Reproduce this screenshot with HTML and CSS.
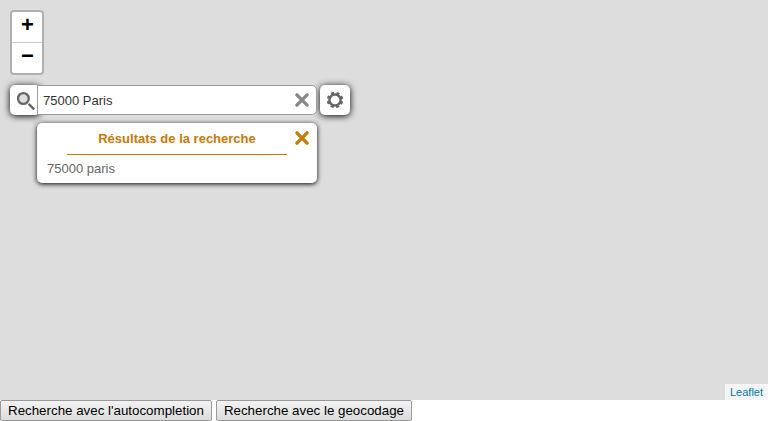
FILE: index.html
```html
<!DOCTYPE html>
<html lang="fr">
<head>
<meta charset="utf-8">
<title>Recherche</title>
<link rel="stylesheet" href="styles.css">
</head>
<body>
<div class="map">
  <div class="zoom">
    <a class="zoom-in">+</a>
    <a class="zoom-out">−</a>
  </div>
  <div class="search">
    <div class="tool picto">
      <svg width="30" height="30" viewBox="0 0 30 30"><circle cx="13.4" cy="13.5" r="5.4" fill="#ddd" stroke="#666" stroke-width="2.3"/><path d="M18.6 18.8L24.2 24.4" stroke="#666" stroke-width="2.4"/></svg>
    </div>
    <div class="field">
      <span class="value">75000 Paris</span>
      <svg class="cross" width="16" height="16" viewBox="0 0 16 16"><path d="M2.9 2.9L13.1 13.1M13.1 2.9L2.9 13.1"/></svg>
    </div>
    <div class="tool advanced">
      <svg width="30" height="30" viewBox="0 0 30 30"><g fill="none" stroke="#666"><circle cx="15" cy="15" r="5.6" stroke-width="2.5"/><circle cx="15" cy="15" r="7.1" stroke-width="2.4" stroke-dasharray="3 2.576" stroke-dashoffset="-1.29"/></g></svg>
    </div>
  </div>
  <div class="results">
    <div class="results-head">
      <div class="title">Résultats de la recherche</div>
      <svg class="cross close" width="16" height="16" viewBox="0 0 16 16"><path d="M2.9 2.9L13.1 13.1M13.1 2.9L2.9 13.1"/></svg>
    </div>
    <div class="result">75000 paris</div>
  </div>
  <div class="attribution">Leaflet</div>
</div>
<div class="actions">
  <button>Recherche avec l'autocompletion</button>
  <button>Recherche avec le geocodage</button>
</div>
</body>
</html>
```
FILE: styles.css
```css
* { box-sizing: border-box; }
body {
  margin: 0;
  overflow: hidden;
  background: #fff;
  font-family: "Liberation Sans", Arial, sans-serif;
}
.map {
  position: relative;
  height: 400px;
  padding: 10px;
  background: #ddd;
}
.zoom {
  width: 34px;
  height: 65px;
  border: 2px solid rgba(0, 0, 0, 0.2);
  border-radius: 4px;
  background: #fff;
  background-clip: padding-box;
}
.zoom a {
  display: block;
  height: 30px;
  padding-left: 1px;
  font-size: 22px;
  font-weight: bold;
  line-height: 26px;
  text-align: center;
}
.zoom .zoom-in {
  height: 31px;
  border-bottom: 1px solid #ccc;
}
.search {
  display: flex;
  height: 30px;
  margin-top: 10px;
}
.tool {
  width: 30px;
  height: 30px;
  border-radius: 5px;
  background: #fff;
  box-shadow: 0 1px 7px #000;
}
.tool svg { display: block; }
.field {
  position: relative;
  display: flex;
  align-items: center;
  justify-content: space-between;
  width: 280px;
  margin: 0 3px 0 -3px;
  padding: 0 6px 0 5px;
  border: 1px solid #999;
  border-radius: 0 5px 5px 0;
  background: #fff;
  color: #333;
  font-size: 13px;
}
.cross {
  fill: none;
  stroke: #888;
  stroke-width: 3.4;
  stroke-linecap: round;
}
.close { stroke: #c77a04; }
.results {
  width: 280px;
  height: 60px;
  margin: 8px 0 0 27px;
  border-radius: 5px;
  background: #fff;
  box-shadow: 0 1px 5px #000;
  font-size: 13px;
}
.results-head {
  display: flex;
  padding: 0 7px 0 30px;
}
.title {
  width: 220px;
  height: 32px;
  border-bottom: 1px solid #c77a04;
  color: #c77a04;
  font-weight: bold;
  line-height: 31px;
  text-align: center;
}
.results-head .close {
  flex: none;
  margin: 7px 0 0 7px;
}
.result {
  padding-left: 10px;
  color: #666;
  line-height: 28px;
}
.attribution {
  position: absolute;
  right: 0;
  bottom: 0;
  height: 16px;
  padding: 0 5px;
  background: rgba(255, 255, 255, 0.7);
  color: #0078a8;
  font-size: 11px;
  line-height: 16px;
}
.actions {
  display: flex;
  gap: 4px;
}
.actions button {
  height: 21px;
  padding: 0 7px;
  border: 1px solid #999;
  border-radius: 2px;
  background: linear-gradient(#f3f3f3, #dcdcdc);
  color: #000;
  font: 13.333px "Liberation Sans", Arial, sans-serif;
  white-space: nowrap;
}
```
